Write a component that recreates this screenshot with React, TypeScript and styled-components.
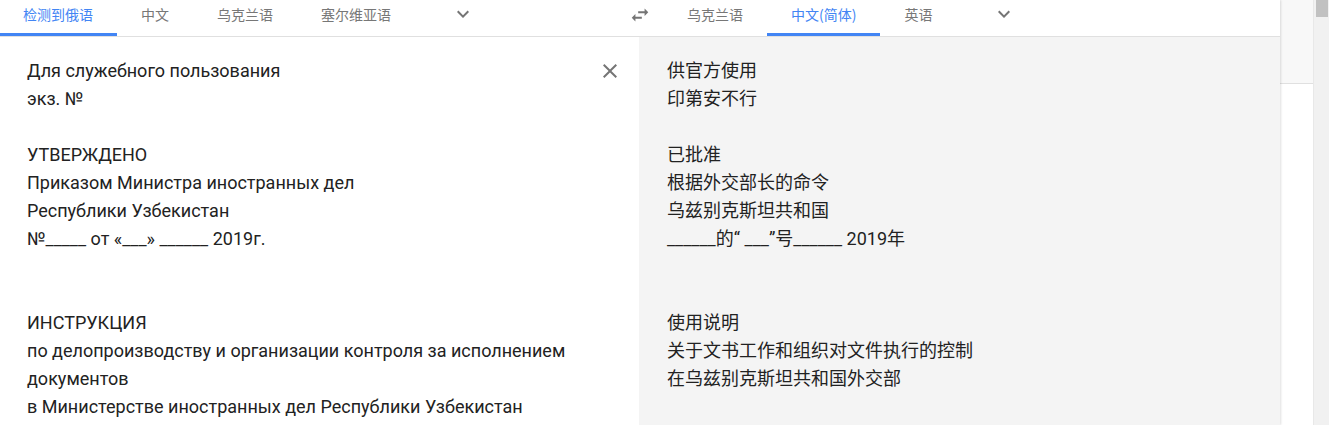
import React from "react";
import styled, {createGlobalStyle} from "styled-components";

const GlobalStyle = createGlobalStyle`
  html, body {
    margin: 0;
    padding: 0;
    background: #fff;
    overflow: hidden;
  }
  body {
    font-family: Roboto, "Noto Sans CJK SC", sans-serif;
  }
`;

const Page = styled.div`
  display: flex;
  width: 1329px;
  height: 425px;
`;

const Card = styled.div`
  width: 1280px;
  display: flex;
  flex-direction: column;
  background: #fff;
  box-shadow: 1px 0 2px rgba(0, 0, 0, 0.12);
  position: relative;
  z-index: 1;
`;

const Side = styled.div`
  width: 33px;
  display: flex;
  flex-direction: column;
`;

const SideTop = styled.div`
  height: 83px;
  background: #f8f8f8;
  border-bottom: 1px solid #e0e0e0;
`;

const Scrollbar = styled.div`
  width: 16px;
  background: #f1f1f1;
  border-left: 1px solid #e8e8e8;
  box-sizing: border-box;
  padding: 0 1px 0 2px;
`;

const Thumb = styled.div`
  height: 17px;
  background: #c1c1c1;
`;

const Header = styled.div`
  display: flex;
  height: 36px;
  border-bottom: 1px solid #e0e0e0;
`;

const TabGroup = styled.div<{ $width?: number }>`
  display: flex;
  align-items: flex-start;
  ${p => p.$width ? `width: ${p.$width}px;` : "flex: 1;"}
`;

const Tab = styled.div<{ $active?: boolean }>`
  height: 36px;
  box-sizing: border-box;
  padding: 0 24px;
  line-height: 29px;
  font-size: 14px;
  font-family: "Noto Sans CJK SC", Roboto, sans-serif;
  color: ${p => p.$active ? "#4285f4" : "#777"};
  border-bottom: 3px solid ${p => p.$active ? "#4285f4" : "transparent"};
  white-space: nowrap;

  &:first-child {
    padding-left: 23px;
  }
`;

const IconButton = styled.div<{ $shift?: number; $top?: number }>`
  width: 48px;
  height: 36px;
  display: flex;
  align-items: flex-start;
  justify-content: center;
  margin-left: ${p => p.$shift ?? 0}px;
  padding-top: ${p => p.$top ?? 2}px;
  box-sizing: border-box;
  color: #757575;
`;

const Body = styled.div`
  flex: 1;
  display: flex;
`;

const Pane = styled.div<{ $shade?: boolean }>`
  position: relative;
  width: ${p => p.$shade ? "641px" : "639px"};
  box-sizing: border-box;
  padding: 20px 0 0 ${p => p.$shade ? "28px" : "27px"};
  background: ${p => p.$shade ? "#f4f4f4" : "#fff"};
  font-size: 18px;
  line-height: 28px;
  color: #222;
  font-family: Roboto, "Noto Sans CJK SC", sans-serif;
`;

const Line = styled.div`
  height: 28px;
  white-space: pre;
`;

const Close = styled.div`
  position: absolute;
  top: 22px;
  right: 17px;
  width: 24px;
  height: 24px;
  color: #757575;
`;

const Chevron = () => (
  <svg width="24" height="24" viewBox="0 0 24 24" fill="currentColor">
    <path d="M16.59 8.59L12 13.17 7.41 8.59 6 10l6 6 6-6z"/>
  </svg>
);

const Swap = () => (
  <svg width="22" height="22" viewBox="0 0 24 24" fill="currentColor">
    <path d="M6.99 11L3 15l3.99 4v-3H14v-2H6.99v-3zM21 9l-3.99-4v3H10v2h7.01v3L21 9z"/>
  </svg>
);

const CloseIcon = () => (
  <svg width="24" height="24" viewBox="0 0 24 24" fill="currentColor">
    <path d="M19 6.41L17.59 5 12 10.59 6.41 5 5 6.41 10.59 12 5 17.59 6.41 19 12 13.41 17.59 19 19 17.59 13.41 12z"/>
  </svg>
);

const source = [
  "Для служебного пользования",
  "экз. №",
  "",
  "УТВЕРЖДЕНО",
  "Приказом Министра иностранных дел",
  "Республики Узбекистан",
  "№_____ от «___» ______ 2019г.",
  "",
  "",
  "ИНСТРУКЦИЯ",
  "по делопроизводству и организации контроля за исполнением",
  "документов",
  "в Министерстве иностранных дел Республики Узбекистан",
];

const target = [
  "供官方使用",
  "印第安不行",
  "",
  "已批准",
  "根据外交部长的命令",
  "乌兹别克斯坦共和国",
  "______的“ ___”号______ 2019年",
  "",
  "",
  "使用说明",
  "关于文书工作和组织对文件执行的控制",
  "在乌兹别克斯坦共和国外交部",
];

export default function App() {
  return (
    <Page>
      <GlobalStyle/>
      <Card>
        <Header>
          <TabGroup $width={616}>
            <Tab $active>检测到俄语</Tab>
            <Tab>中文</Tab>
            <Tab>乌克兰语</Tab>
            <Tab>塞尔维亚语</Tab>
            <IconButton $shift={24}><Chevron/></IconButton>
          </TabGroup>
          <IconButton $top={4}><Swap/></IconButton>
          <TabGroup>
            <Tab>乌克兰语</Tab>
            <Tab $active>中文(简体)</Tab>
            <Tab>英语</Tab>
            <IconButton $shift={24}><Chevron/></IconButton>
          </TabGroup>
        </Header>
        <Body>
          <Pane>
            {source.map((t, i) => <Line key={i}>{t}</Line>)}
            <Close><CloseIcon/></Close>
          </Pane>
          <Pane $shade>
            {target.map((t, i) => <Line key={i}>{t}</Line>)}
          </Pane>
        </Body>
      </Card>
      <Side>
        <SideTop/>
      </Side>
      <Scrollbar>
        <Thumb/>
      </Scrollbar>
    </Page>
  );
}
